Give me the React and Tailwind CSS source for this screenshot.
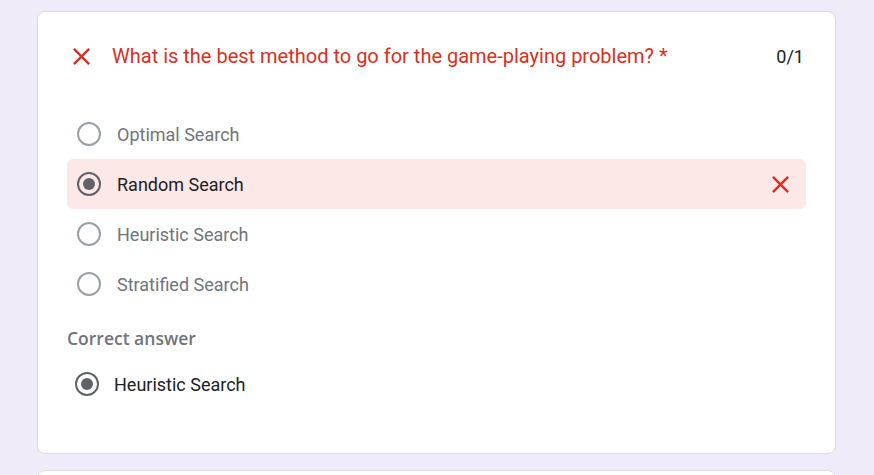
import React from 'react'

function CloseIcon({ className }) {
  return (
    <svg viewBox="0 0 24 24" className={className} fill="currentColor">
      <path d="M19 6.41L17.59 5 12 10.59 6.41 5 5 6.41 10.59 12 5 17.59 6.41 19 12 13.41 17.59 19 19 17.59 13.41 12z" />
    </svg>
  )
}

function Radio({ checked }) {
  if (checked) {
    return (
      <span className="flex h-[24px] w-[24px] shrink-0 items-center justify-center rounded-full border-2 border-[#5f6368]">
        <span className="h-[12px] w-[12px] rounded-full bg-[#5f6368]" />
      </span>
    )
  }
  return <span className="h-[24px] w-[24px] shrink-0 rounded-full border-2 border-[#9aa0a6]" />
}

const options = [
  { label: 'Optimal Search' },
  { label: 'Random Search', picked: true },
  { label: 'Heuristic Search' },
  { label: 'Stratified Search' },
]

export default function App() {
  return (
    <div className="min-h-screen bg-[#f0ebf8] pt-[11px] font-['Roboto',sans-serif]">
      <div className="ml-[37px] w-[799px] rounded-lg border border-[#dadce0] bg-white px-[29px] pt-[30px] pb-[45px]">
        <div className="flex h-[28px] items-center">
          <CloseIcon className="h-[29px] w-[29px] shrink-0 text-[#d93025]" />
          <div className="ml-[16px] flex-1 text-[20px] text-[#d93025]">
            What is the best method to go for the game-playing problem? *
          </div>
          <div className="pr-[2px] text-[18px] text-[#202124]">0/1</div>
        </div>

        <div className="mt-[39px] flex flex-col">
          {options.map((o) => (
            <div
              key={o.label}
              className={
                o.picked
                  ? 'flex h-[50px] items-center rounded-md bg-[#fce8e6] pl-[10px] pr-[11px]'
                  : 'flex h-[50px] items-center pl-[10px] pr-[11px]'
              }
            >
              <Radio checked={o.picked} />
              <span
                className={
                  o.picked
                    ? 'ml-[16px] flex-1 text-[18px] text-[#202124]'
                    : 'ml-[16px] flex-1 text-[18px] text-[#70757a]'
                }
              >
                {o.label}
              </span>
              {o.picked && <CloseIcon className="h-[29px] w-[29px] text-[#d93025]" />}
            </div>
          ))}
        </div>

        <div className="mt-[19px] h-[20px] font-['Open_Sans',sans-serif] text-[17.5px] leading-[20px] font-semibold text-[#70757a]">
          Correct answer
        </div>
        <div className="mt-[12px] flex h-[48px] items-center pl-[8px]">
          <Radio checked />
          <span className="ml-[15px] text-[18px] text-[#202124]">Heuristic Search</span>
        </div>
      </div>
      <div className="mt-[16px] ml-[37px] h-[100px] w-[799px] rounded-lg border border-[#dadce0] bg-white" />
    </div>
  )
}
